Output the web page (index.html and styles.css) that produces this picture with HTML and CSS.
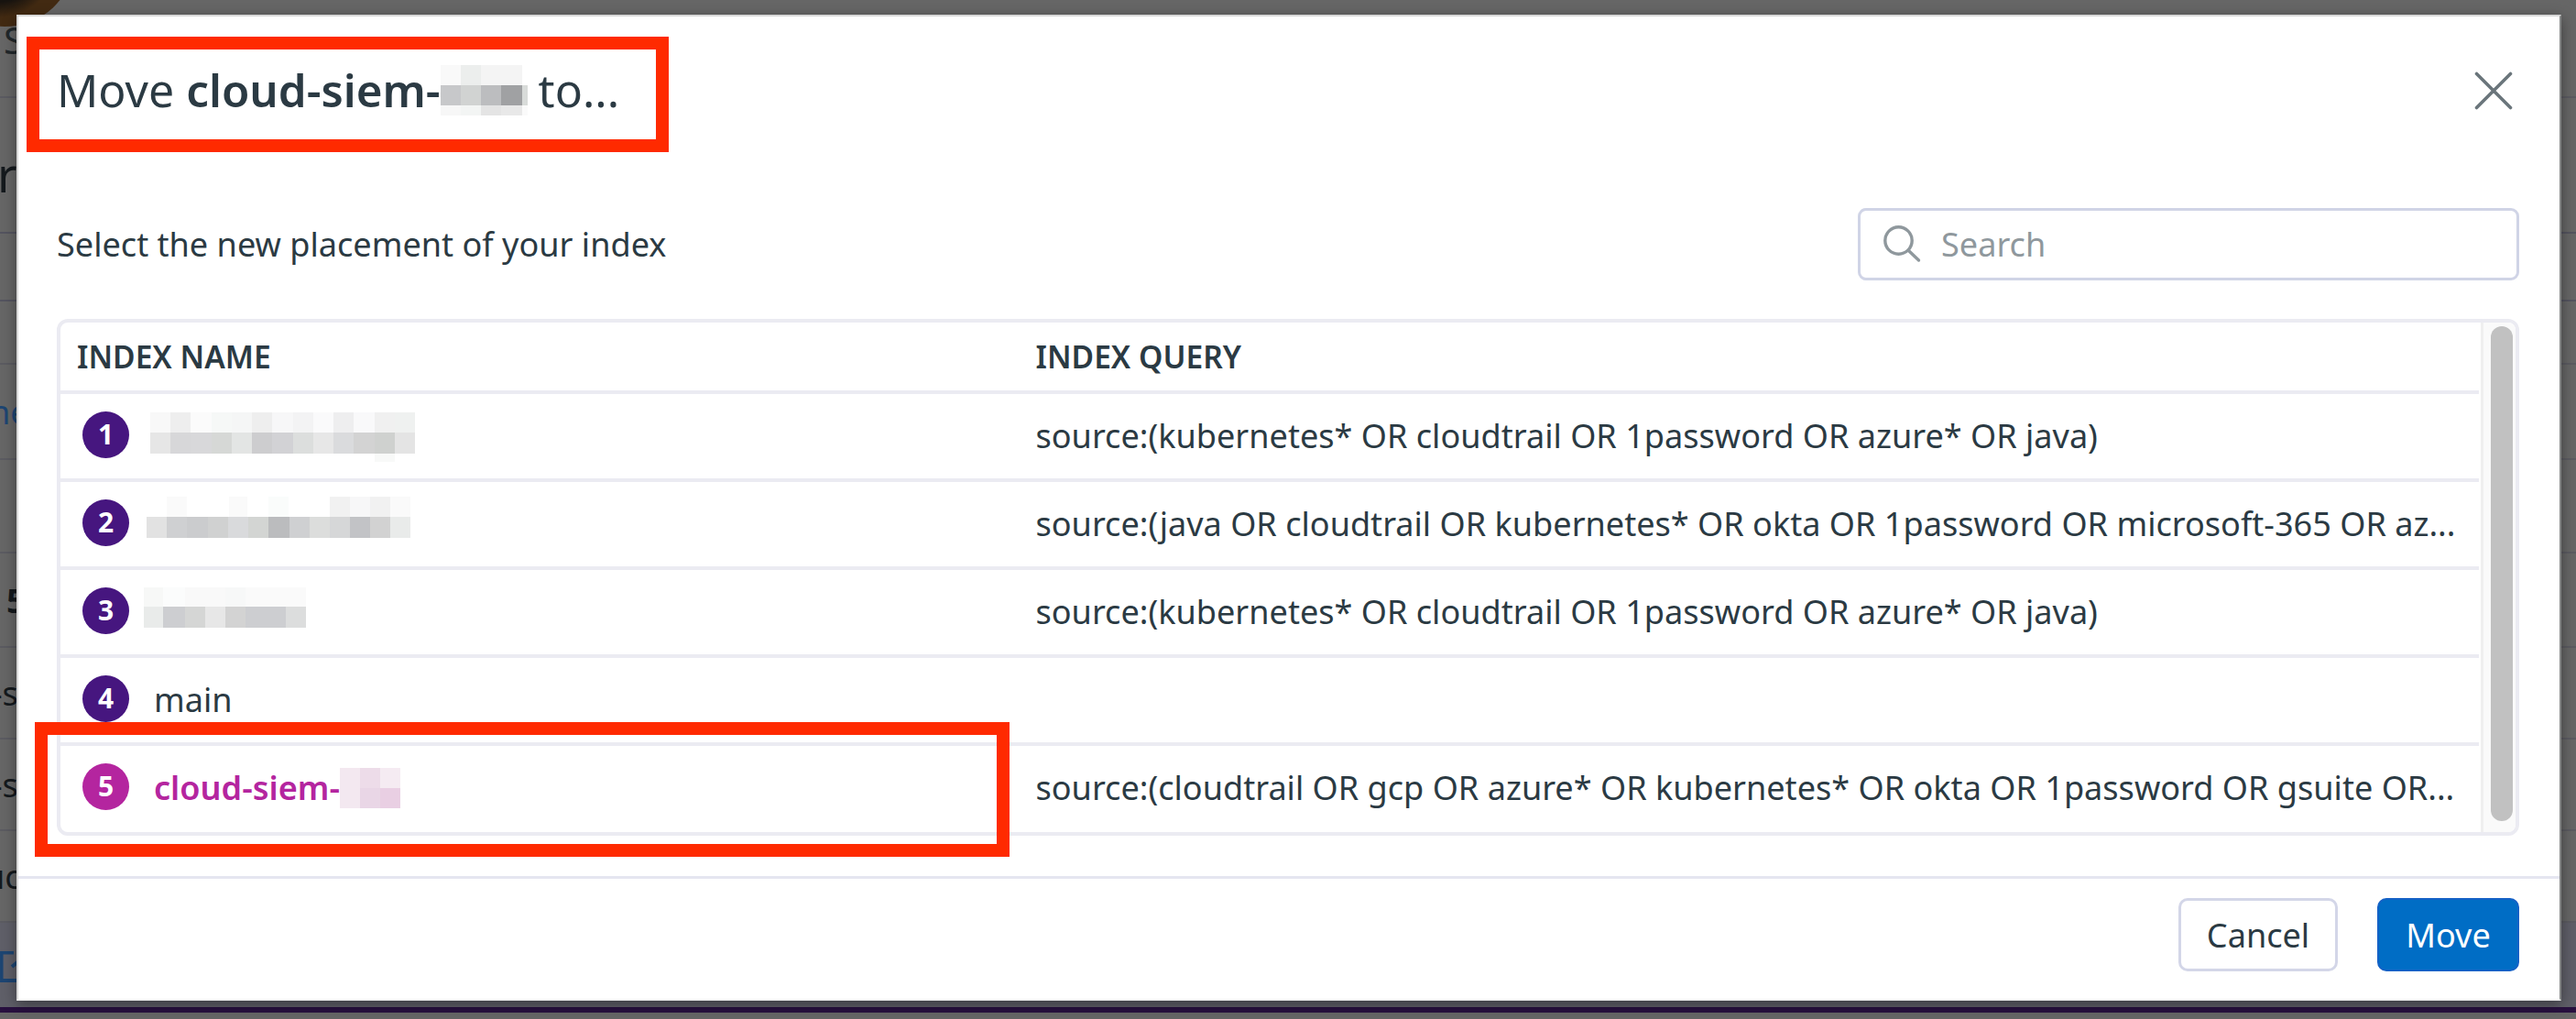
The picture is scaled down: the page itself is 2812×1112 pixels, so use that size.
FILE: index.html
```html
<!DOCTYPE html>
<html lang="en">
<head>
<meta charset="utf-8">
<title>Move index</title>
<link rel="stylesheet" href="styles.css">
</head>
<body>
<div class="page" aria-hidden="true">
  <div class="strip s1"><span class="avatar"></span><span class="frag f-s">S</span></div>
  <div class="strip s2"><span class="frag f-r">r</span></div>
  <div class="strip s3"></div>
  <div class="strip s4"></div>
  <div class="strip s5"><span class="frag f-ne">ne</span></div>
  <div class="strip s6"></div>
  <div class="strip s7"><span class="frag f-5">5</span></div>
  <div class="strip s8"><span class="frag f-ds">-s</span></div>
  <div class="strip s9"><span class="frag f-ds">-s</span></div>
  <div class="strip s10"><span class="frag f-uc">uc</span></div>
  <div class="strip s11"><svg class="ext" width="34" height="34" viewBox="0 0 34 34"><path d="M15 1.5H1.500V32H32V20M13 17L31 2" fill="none" stroke="#1d4572" stroke-width="4"/></svg></div>
</div>

<div class="overlay">
  <section class="modal">
    <header class="modal-head">
      <h1 class="title"><span>Move <b class="title-name">cloud-siem-</b></span><svg class="title-mosaic" width="95" height="55" viewBox="0 0 95 55" shape-rendering="crispEdges"><path fill="#f9f9f9" d="M0 0h22v22H0z"/><path fill="#eceeed" d="M22 0h22v22H22z"/><path fill="#f4f4f4" d="M44 0h45v22H44z"/><path fill="#c7c8ca" d="M0 22h22v22H0z"/><path fill="#d1d3d2" d="M22 22h22v22H22z"/><path fill="#bcbdbf" d="M44 22h22v22H44z"/><path fill="#a0a1a3" d="M66 22h23v22H66z"/><path fill="#d8dbd9" d="M89 22h6v22h-6z"/><path fill="#f7f7f7" d="M0 44h22v11H0z"/><path fill="#f3f5f4" d="M22 44h22v11H22z"/><path fill="#e4e4e4" d="M44 44h22v11H44z"/><path fill="#e8e8e8" d="M66 44h23v11H66z"/><path fill="#fafafa" d="M89 44h6v11h-6z"/></svg><span class="title-to">to...</span></h1>
      <svg class="close" width="42" height="42" viewBox="0 0 42 42"><path d="M2.500 2.500L39.500 39.500M39.500 2.500L2.500 39.500" stroke="#6a757b" stroke-width="3.600" stroke-linecap="round"/></svg>
    </header>
    <div class="toolbar">
      <p class="hint">Select the new placement of your index</p>
      <div class="search"><svg width="42" height="42" viewBox="0 0 42 42"><circle cx="17.500" cy="17.500" r="14.700" fill="none" stroke="#8f989d" stroke-width="3.400"/><path d="M28.500 28.500L39.500 39" stroke="#8f989d" stroke-width="3.400" stroke-linecap="round"/></svg><span>Search</span></div>
    </div>
    <div class="table">
      <div class="rows">
        <div class="row head"><div class="name">INDEX NAME</div><div class="query">INDEX QUERY</div></div>
        <div class="row"><div class="name"><i class="num">1</i><svg class="m1" width="289" height="54" viewBox="0 0 289 54" shape-rendering="crispEdges"><path fill="#f8f8f8" d="M0 0h22v22H0z"/><path fill="#eee" d="M22 0h22v22H22z"/><path fill="#fbfbfb" d="M44 0h23v22H44z"/><path fill="#f6f8f7" d="M67 0h22v22H67z"/><path fill="#f5f6f6" d="M89 0h22v22H89z"/><path fill="#eee" d="M111 0h22v22h-22z"/><path fill="#f7f7f8" d="M133 0h23v22h-23z"/><path fill="#f3f3f4" d="M156 0h22v22h-22z"/><path fill="#fafafb" d="M178 0h22v22h-22z"/><path fill="#eeeeef" d="M200 0h22v22h-22z"/><path fill="#f9f9fa" d="M222 0h23v22h-23z"/><path fill="#f0f0f0" d="M245 0h22v22h-22z"/><path fill="#eff1f0" d="M267 0h22v22h-22z"/><path fill="#e6e6e6" d="M0 22h22v23H0z"/><path fill="#d7d7d9" d="M22 22h22v23H22z"/><path fill="#d8d8da" d="M44 22h23v23H44z"/><path fill="#d6d8d6" d="M67 22h22v23H67z"/><path fill="#e3e5e4" d="M89 22h22v23H89z"/><path fill="#cdcdcf" d="M111 22h22v23h-22z"/><path fill="#d2d2d5" d="M133 22h23v23h-23z"/><path fill="#dcdedd" d="M156 22h22v23h-22z"/><path fill="#e7e7e7" d="M178 22h22v23h-22z"/><path fill="#dadbdd" d="M200 22h22v23h-22z"/><path fill="#d3d3d3" d="M222 22h23v23h-23z"/><path fill="#cfd1cf" d="M245 22h22v23h-22z"/><path fill="#e4e4e4" d="M267 22h22v23h-22z"/><path fill="#f8f9f8" d="M245 45h22v9h-22z"/></svg></div><div class="query">source:(kubernetes* OR cloudtrail OR 1password OR azure* OR java)</div></div>
        <div class="row"><div class="name"><i class="num">2</i><svg class="m2" width="288" height="45" viewBox="0 0 288 45" shape-rendering="crispEdges"><path fill="#fafafa" d="M22 0h22v22H22zM90 0h20v22H90zM266 0h22v22h-22z"/><path fill="#fafcfb" d="M133 0h22v22h-22z"/><path fill="#f1f1f1" d="M200 0h22v22h-22zM244 0h22v22h-22z"/><path fill="#f7f7f8" d="M222 0h22v22h-22z"/><path fill="#e2e2e2" d="M0 22h22v23H0z"/><path fill="#cfd0d2" d="M22 22h22v23H22z"/><path fill="#cbccce" d="M44 22h23v23H44z"/><path fill="#d0d1d1" d="M67 22h22v23H67z"/><path fill="#d9dadc" d="M89 22h22v23H89z"/><path fill="#d3d5d3" d="M111 22h22v23h-22z"/><path fill="#bbbcbe" d="M133 22h23v23h-23z"/><path fill="#cfd0d2" d="M156 22h22v23h-22z"/><path fill="#dcdddc" d="M178 22h22v23h-22z"/><path fill="#d6d7d8" d="M200 22h22v23h-22z"/><path fill="#c2c3c6" d="M222 22h22v23h-22z"/><path fill="#d2d2d2" d="M244 22h22v23h-22z"/><path fill="#e9ebea" d="M266 22h22v23h-22z"/></svg></div><div class="query">source:(java OR cloudtrail OR kubernetes* OR okta OR 1password OR microsoft-365 OR az...</div></div>
        <div class="row"><div class="name"><i class="num">3</i><svg class="m3" width="177" height="44" viewBox="0 0 177 44" shape-rendering="crispEdges"><path fill="#f7f8f7" d="M0 0h21v21H0z"/><path fill="#fbfcfc" d="M21 0h24v21H21z"/><path fill="#f9f9f9" d="M45 0h44v21H45z"/><path fill="#f7f8f8" d="M89 0h22v21H89z"/><path fill="#fafafa" d="M111 0h66v21h-66z"/><path fill="#e9ebea" d="M0 21h21v23H0z"/><path fill="#cdced1" d="M21 21h24v23H21z"/><path fill="#d5d6d5" d="M45 21h22v23H45z"/><path fill="#e7e7e7" d="M67 21h22v23H67z"/><path fill="#d3d3d3" d="M89 21h22v23H89z"/><path fill="#cdced1" d="M111 21h44v23h-44z"/><path fill="#dcdddd" d="M155 21h22v23h-22z"/></svg></div><div class="query">source:(kubernetes* OR cloudtrail OR 1password OR azure* OR java)</div></div>
        <div class="row"><div class="name"><i class="num">4</i><span>main</span></div><div class="query"></div></div>
        <div class="row current"><div class="name"><i class="num">5</i><b class="current-name">cloud-siem-</b><svg class="m5" width="66" height="44" viewBox="0 0 66 44" shape-rendering="crispEdges"><path fill="#f3e8f0" d="M0 0h22v44H0z"/><path fill="#eddce9" d="M22 0h22v22H22z"/><path fill="#f5ebf2" d="M44 0h22v22H44z"/><path fill="#e9d6e6" d="M22 22h22v22H22z"/><path fill="#e9cfe3" d="M44 22h22v22H44z"/></svg></div><div class="query">source:(cloudtrail OR gcp OR azure* OR kubernetes* OR okta OR 1password OR gsuite OR...</div></div>
      </div>
      <div class="track"><div class="thumb"></div></div>
    </div>
    <footer class="modal-foot">
      <button class="btn cancel">Cancel</button>
      <button class="btn move">Move</button>
    </footer>
  </section>
</div>
<div class="mark mark-title"></div>
<div class="mark mark-row"></div>
</body>
</html>
```
FILE: styles.css
```css
* { box-sizing: border-box; }
body {
  margin: 0;
  width: 2812px;
  height: 1112px;
  overflow: hidden;
  position: relative;
  background: #666;
  color: #2b3a43;
  font-family: "Noto Sans", sans-serif;
  font-size: 36.1px;
}

/* dimmed page behind the dialog */
.page { height: 1112px; display: flex; flex-direction: column; color: #14191d; }
.strip { flex: none; display: flex; align-items: center; overflow: hidden; border-bottom: 2px solid #5b5b61; line-height: 50px; }
.s1 { height: 107px; position: relative; align-items: flex-start; }
.s2 { height: 148px; border-color: #54545f; }
.s3 { height: 74px; border-color: #54545f; }
.s4 { height: 69px; }
.s5 { height: 104px; }
.s6 { height: 102px; }
.s7 { height: 103px; }
.s8, .s9, .s10 { height: 100px; }
.s11 { height: 98px; background: #5f5f68; border-bottom: 6px solid #28103f; }
.avatar { position: absolute; left: -70px; top: -113px; width: 150px; height: 142px; border-radius: 50%; background: radial-gradient(circle at 45% 45%, #17130f 0 45%, #422a12 60%); }
.frag { white-space: nowrap; }
.f-s { margin: 19px 0 0 4px; font-size: 40px; color: #22282b; }
.f-r { margin: 20px 0 0 -3px; font-size: 52px; }
.f-ne { margin: 0 0 0 -11px; color: #1d4572; }
.f-5 { margin-left: 7px; font-weight: 700; }
.f-ds { margin-left: -9px; }
.f-uc { margin-left: -17px; }
.ext { margin: 3px 0 0 0; }

.overlay { position: absolute; inset: 0; padding: 16px 16px 20px 18px; }
.modal {
  height: 1076px;
  display: flex;
  flex-direction: column;
  background: #fff;
  border: 2px solid #d8d8d8;
  border-right-color: #858787;
  border-bottom-color: #f0f0f0;
  box-shadow: 0 4px 14px rgba(0, 0, 0, .4);
}

.modal-head { height: 164px; padding: 0 51px 4px 42px; display: flex; justify-content: space-between; align-items: center; }
.title { margin: 0; display: flex; align-items: center; font-size: 50px; font-weight: 400; line-height: 66px; }
.title-name { font-size: 49.3px; font-weight: 600; }
.title-mosaic { margin-right: 12px; }
.close { margin-top: 2px; }

.toolbar { height: 166px; padding: 45px 44px 0 42px; display: flex; justify-content: space-between; align-items: flex-start; }
.hint { margin: 14px 0 0; line-height: 50px; }
.search { width: 722px; height: 79px; padding: 0 0 1px 24px; display: flex; align-items: center; gap: 22px; border: 3px solid #d0d4e6; border-radius: 9px; color: #8f989d; }

.table { margin: 0 44px 0 42px; height: 564px; display: flex; border: 4px solid #ebebf2; border-radius: 12px; overflow: hidden; }
.rows { flex: none; width: 2640px; }
.row { height: 96px; padding-bottom: 2px; display: flex; align-items: center; border-bottom: 4px solid #ebebf2; }
.row.head { height: 78px; padding-bottom: 0; font-size: 33.6px; font-weight: 600; }
.row.head .name { padding-left: 18px; }
.row.current { height: 94px; padding-bottom: 4px; border-bottom: 0; }
.name { flex: none; width: 1064.5px; padding-left: 24px; display: flex; align-items: center; }
.query { white-space: nowrap; }
.num { flex: none; width: 51px; height: 51px; margin: 0 27px 2px 0; border-radius: 50%; background: #46167f; color: #fff; font: 700 30px/49px "Noto Sans", sans-serif; text-align: center; }
.current .num { background: #b4259f; }
.current-name { font-weight: 600; color: #b4259f; }
.m1 { margin: 3px 0 0 -4px; }
.m2 { margin: 0 0 13px -8px; }
.m3 { margin: 0 0 8px -11px; }
.m5 { margin-top: 2px; }
.track { flex: none; width: 38px; margin-left: 2px; padding: 4px 0 0 8px; background: #fafafa; border-left: 3px solid #efefef; }
.thumb { width: 24px; height: 540px; border-radius: 12px; background: #c1c1c1; }

.modal-foot { margin-top: 44px; border-top: 3px solid #e5e6f0; padding: 21px 44px 0; display: flex; justify-content: flex-end; gap: 43px; }
.btn { height: 80px; border-radius: 10px; font: 400 36.1px/50px "Noto Sans", sans-serif; padding: 0; }
.cancel { width: 174px; background: #fff; border: 3px solid #d3d6e8; color: #2b3a43; }
.move { width: 155px; background: #006dc5; border: 2px solid #1461c6; color: #fff; }

/* highlight frames drawn over the dialog */
.mark { position: absolute; border: 14px solid #ff2a00; }
.mark-title { left: 29px; top: 40px; width: 701px; height: 126px; }
.mark-row { left: 38px; top: 788px; width: 1064px; height: 147px; }
```
